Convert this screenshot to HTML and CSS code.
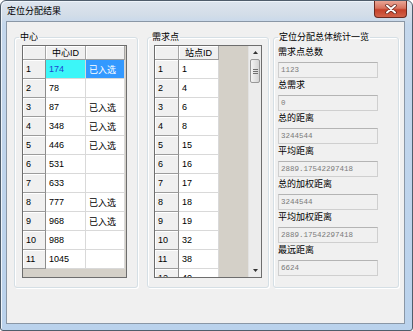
FILE: index.html
```html
<!DOCTYPE html>
<html lang="zh-CN">
<head>
<meta charset="UTF-8">
<title>定位分配结果</title>
<link rel="stylesheet" href="styles.css">
</head>
<body>

<div class="window">
    <div class="titlebar">
        <span class="title">定位分配结果</span>
        <div class="close-btn">
            <svg width="14" height="10" viewBox="0 0 14 10">
                <path d="M3 1.5 L11 8.5 M11 1.5 L3 8.5" stroke="#5a2018" stroke-width="3.4" stroke-linecap="round"/>
                <path d="M3 1.5 L11 8.5 M11 1.5 L3 8.5" stroke="#ffffff" stroke-width="2" stroke-linecap="round"/>
            </svg>
        </div>
    </div>

    <div class="client">
        <fieldset class="group group-center">
            <legend>中心</legend>
            <div class="grid grid-center">
                <table class="grid-table">
                    <tr><th class="head-cell w-row"></th><th class="head-cell w-id">中心ID</th><th class="head-cell w-state"></th></tr>
                    <tr><th>1</th><td class="current">174</td><td class="selected">已入选</td></tr>
                    <tr><th>2</th><td>78</td><td></td></tr>
                    <tr><th>3</th><td>87</td><td>已入选</td></tr>
                    <tr><th>4</th><td>348</td><td>已入选</td></tr>
                    <tr><th>5</th><td>446</td><td>已入选</td></tr>
                    <tr><th>6</th><td>531</td><td></td></tr>
                    <tr><th>7</th><td>633</td><td></td></tr>
                    <tr><th>8</th><td>777</td><td>已入选</td></tr>
                    <tr><th>9</th><td>968</td><td>已入选</td></tr>
                    <tr><th>10</th><td>988</td><td></td></tr>
                    <tr><th>11</th><td>1045</td><td></td></tr>
                </table>
            </div>
        </fieldset>

        <fieldset class="group group-demand">
            <legend>需求点</legend>
            <div class="grid grid-demand">
                <div class="grid-body">
                    <table class="grid-table">
                        <tr><th class="head-cell w-row2"></th><th class="head-cell w-id">站点ID</th></tr>
                        <tr><th>1</th><td>1</td></tr>
                        <tr><th>2</th><td>4</td></tr>
                        <tr><th>3</th><td>6</td></tr>
                        <tr><th>4</th><td>8</td></tr>
                        <tr><th>5</th><td>15</td></tr>
                        <tr><th>6</th><td>16</td></tr>
                        <tr><th>7</th><td>17</td></tr>
                        <tr><th>8</th><td>18</td></tr>
                        <tr><th>9</th><td>19</td></tr>
                        <tr><th>10</th><td>32</td></tr>
                        <tr><th>11</th><td>38</td></tr>
                        <tr><th>12</th><td>40</td></tr>
                    </table>
                </div>
                <div class="scrollbar">
                    <div class="arrow">
                        <svg width="5" height="3" viewBox="0 0 5 3"><path d="M0 3 L2.5 0 L5 3 Z" fill="#333"/></svg>
                    </div>
                    <div class="thumb"><span></span><span></span><span></span></div>
                    <div class="track"></div>
                    <div class="arrow">
                        <svg width="5" height="3" viewBox="0 0 5 3"><path d="M0 0 L2.5 3 L5 0 Z" fill="#333"/></svg>
                    </div>
                </div>
            </div>
        </fieldset>

        <fieldset class="group group-stats">
            <legend>定位分配总体统计一览</legend>
            <div class="stat">
                <div class="stat-label">需求点总数</div>
                <div class="stat-box">1123</div>
            </div>
            <div class="stat">
                <div class="stat-label">总需求</div>
                <div class="stat-box">0</div>
            </div>
            <div class="stat">
                <div class="stat-label">总的距离</div>
                <div class="stat-box">3244544</div>
            </div>
            <div class="stat">
                <div class="stat-label">平均距离</div>
                <div class="stat-box">2889.17542297418</div>
            </div>
            <div class="stat">
                <div class="stat-label">总的加权距离</div>
                <div class="stat-box">3244544</div>
            </div>
            <div class="stat">
                <div class="stat-label">平均加权距离</div>
                <div class="stat-box">2889.17542297418</div>
            </div>
            <div class="stat">
                <div class="stat-label">最远距离</div>
                <div class="stat-box">6624</div>
            </div>
        </fieldset>
    </div>
</div>

</body>
</html>
```

FILE: styles.css
```css
body {
    margin: 0;
    font-family: "Liberation Sans", "Noto Sans CJK SC", sans-serif;
    font-size: 9px;
    color: #000;
    background: #fff;
}

.window {
    width: 413px;
    height: 331px;
    box-sizing: border-box;
    padding: 0 7px 6px 5px;
    display: flex;
    flex-direction: column;
    border: 1px solid #4f5d6b;
    border-radius: 6px 6px 3px 3px;
    background: linear-gradient(to bottom, #dde5ee 0px, #d3dde8 14px, #c4d7ec 24px, #bad2ec 100%);
    box-shadow: inset 1px 1px 0 #eef4fa;
}

.titlebar {
    height: 20px;
    display: flex;
    justify-content: space-between;
    align-items: flex-start;
}

.title {
    margin: 4px 0 0 1px;
    line-height: 12px;
    font-family: "Noto Sans CJK SC", sans-serif;
}

.close-btn {
    width: 33px;
    height: 17px;
    margin-right: -2px;
    box-sizing: border-box;
    border: 1px solid #6b2a20;
    border-top: none;
    border-radius: 0 0 4px 4px;
    background: linear-gradient(to bottom, #e9a595 0%, #d7735e 45%, #c5412a 55%, #d2634a 100%);
    display: flex;
    align-items: center;
    justify-content: center;
}

.client {
    flex: 1;
    display: flex;
    padding: 9px 0 35px 7px;
    background: #f0f0f0;
    border: 1px solid #8a97a6;
}

.group {
    margin: 0;
    padding: 2px 0 0 7px;
    border: 1px solid #d5dfe5;
    border-radius: 3px;
    box-shadow: inset 1px 1px 0 #fff, 1px 1px 0 #fff;
    min-width: 0;
}

.group legend {
    margin-left: -3px;
    padding: 0 1px;
    line-height: 12px;
    font-family: "Noto Sans CJK SC", sans-serif;
}

.group-center {
    width: 124px;
    box-sizing: border-box;
}

.group-demand {
    width: 122px;
    box-sizing: border-box;
    margin-left: 9px;
    padding-left: 6px;
}

.group-stats {
    width: 126px;
    box-sizing: border-box;
    margin-left: 4px;
    padding-left: 4px;
}

.group-stats legend {
    margin-left: 0;
}

/* data grids */
.grid {
    height: 233px;
    box-sizing: border-box;
    border: 1px solid #6d6d6d;
    background: #d4d0c8;
    overflow: hidden;
}

.grid-center {
    width: 105px;
}

.grid-demand {
    width: 108px;
    display: flex;
}

.grid-body {
    flex: 1;
    overflow: hidden;
}

.grid-table {
    border-collapse: separate;
    border-spacing: 0;
    table-layout: fixed;
}

.grid-table th,
.grid-table td {
    box-sizing: border-box;
    height: 19px;
    padding: 0 0 0 3px;
    text-align: left;
    font-weight: normal;
    white-space: nowrap;
    overflow: hidden;
}

.grid-table td {
    background: #fff;
    border-right: 1px solid #d9d9d9;
    border-bottom: 1px solid #d9d9d9;
    font-family: "Liberation Sans", "Noto Sans CJK SC", sans-serif;
}

.grid-table th {
    background: #f0f0f0;
    border-right: 1px solid #8c8c8c;
    border-bottom: 1px solid #9c9c9c;
    box-shadow: inset 1px 1px 0 #fff;
}

.grid-table th.head-cell {
    height: 14px;
    line-height: 12px;
    text-align: center;
    padding: 0;
    border-right: 1px solid #a6a6a6;
}

.w-row { width: 23px; }
.w-row2 { width: 24px; }
.w-id { width: 40px; }
.w-state { width: 39px; }

.grid-table td.current {
    background: #3cf6f8;
    color: #1c46d0;
}

.grid-table td.selected {
    background: #3399ff;
    color: #fff;
}

.scrollbar {
    width: 13px;
    display: flex;
    flex-direction: column;
    background: #ececec;
    border-left: 1px solid #e2e2e2;
    box-sizing: border-box;
}

.scrollbar .arrow {
    height: 13px;
    display: flex;
    align-items: center;
    justify-content: center;
}

.scrollbar .thumb {
    height: 24px;
    margin: 0 1px;
    box-sizing: border-box;
    border: 1px solid #989898;
    border-radius: 2px;
    background: linear-gradient(to right, #f4f4f4, #e4e4e4 50%, #d4d4d4);
    display: flex;
    flex-direction: column;
    align-items: center;
    justify-content: center;
    gap: 1px;
}

.scrollbar .thumb span {
    width: 5px;
    height: 1px;
    background: #707070;
}

.scrollbar .track {
    flex: 1;
}

/* statistics */
.stat-label {
    height: 17px;
    line-height: 14px;
    font-family: "Noto Sans CJK SC", sans-serif;
}

.stat-box {
    width: 100px;
    height: 16px;
    box-sizing: border-box;
    padding-left: 2px;
    line-height: 14px;
    border: 1px solid #cfcfcf;
    border-top-color: #b4b4b4;
    background: #f0f0f0;
    color: #7a7a7a;
    font-family: "Liberation Mono", monospace;
    font-size: 7.5px;
}
```
